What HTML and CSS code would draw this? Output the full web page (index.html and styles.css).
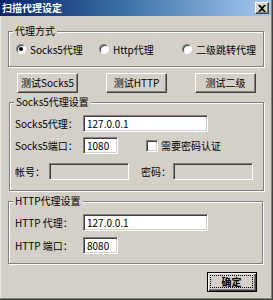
FILE: index.html
```html
<!DOCTYPE html>
<html>
<head>
<meta charset="utf-8">
<link rel="stylesheet" href="styles.css">
</head>
<body>
<div class="dialog">
  <div class="titlebar">
    <span class="title">扫描代理设定</span>
    <span class="close"><svg width="8" height="7" viewBox="0 0 8 7"><path d="M0 0h2l2 2 2-2h2L5 3.5 8 7H6L4 5 2 7H0l3-3.5z" fill="#000"/></svg></span>
  </div>

  <div class="group g1">
    <span class="legend">代理方式</span>
    <div class="radios">
      <label class="radio r1"><span class="rb checked"></span>Socks5代理</label>
      <label class="radio r2"><span class="rb"></span>Http代理</label>
      <label class="radio r3"><span class="rb"></span>二级跳转代理</label>
    </div>
  </div>

  <div class="btnrow">
    <span class="btn">测试Socks5</span>
    <span class="btn">测试HTTP</span>
    <span class="btn">测试二级</span>
  </div>

  <div class="group g2">
    <span class="legend">Socks5代理设置</span>
    <div class="row">
      <span class="lbl">Socks5代理：</span>
      <span class="inp wide">127.0.0.1</span>
    </div>
    <div class="row row2">
      <span class="lbl">Socks5端口：</span>
      <span class="inp port">1080</span>
      <span class="cb"></span>
      <span class="cbtext">需要密码认证</span>
    </div>
    <div class="row row3">
      <span class="lbl short">帐号：</span>
      <span class="inp acct dis"></span>
      <span class="lbl pwd">密码：</span>
      <span class="inp acct dis"></span>
    </div>
  </div>

  <div class="group g3">
    <span class="legend">HTTP代理设置</span>
    <div class="row">
      <span class="lbl">HTTP 代理：</span>
      <span class="inp wide">127.0.0.1</span>
    </div>
    <div class="row row2b">
      <span class="lbl">HTTP 端口：</span>
      <span class="inp port">8080</span>
    </div>
  </div>

  <div class="footer">
    <span class="btn ok"><span class="focus">确定</span></span>
  </div>
</div>
</body>
</html>
```

FILE: styles.css
```css
* { box-sizing: border-box; }
html, body { margin: 0; padding: 0; background: #d4d0c8; }
body {
  font-family: "Noto Sans CJK SC", "Liberation Sans", sans-serif;
  font-size: 10px;
  color: #000;
}
.dialog {
  width: 273px;
  height: 300px;
  background: #d4d0c8;
  box-shadow: inset -1px -1px 0 #404040, inset -2px -2px 0 #808080, inset 1px 0 0 #e8e6e1;
  overflow: hidden;
}
.titlebar {
  height: 16px;
  margin-right: 2px;
  background: linear-gradient(to right, #0a246a 0%, #3a6ea5 45%, #a6caf0 100%);
  display: flex;
  align-items: center;
  justify-content: space-between;
  padding: 0 2px 0 2px;
}
.title {
  color: #fff;
  font-weight: bold;
  font-size: 10px;
  line-height: 14px;
  letter-spacing: 0;
}
.close {
  width: 14px;
  height: 12px;
  background: #d4d0c8;
  border-top: 1px solid #fff;
  border-left: 1px solid #fff;
  border-right: 1px solid #404040;
  border-bottom: 1px solid #404040;
  box-shadow: inset -1px -1px 0 #808080;
  display: flex;
  align-items: center;
  justify-content: center;
}
.close svg { display: block; }

.group {
  position: relative;
  border: 1px solid #808080;
  box-shadow: inset 1px 1px 0 #fff, 1px 1px 0 #fff;
}
.legend {
  position: absolute;
  top: -8px;
  left: 4px;
  padding: 0 2px;
  line-height: 14px;
  background: #d4d0c8;
  white-space: nowrap;
}
.g1 {
  margin: 15px 9px 0 8px;
  height: 36px;
  padding: 10px 0 0 7px;
}
.radios { display: flex; height: 14px; align-items: center; }
.radio { display: flex; align-items: center; white-space: nowrap; }
.r1 { width: 83px; }
.r2 { width: 83px; }
.rb {
  width: 10px;
  height: 10px;
  border-radius: 50%;
  background: #fff;
  border: 1px solid;
  border-color: #808080 #fff #fff #808080;
  box-shadow: inset 1px 1px 0 #404040;
  margin-right: 4px;
  position: relative;
  flex: none;
}
.rb.checked::after {
  content: "";
  position: absolute;
  left: 2px;
  top: 2px;
  width: 4px;
  height: 4px;
  border-radius: 50%;
  background: #000;
}

.btnrow {
  display: flex;
  gap: 28px;
  margin: 6px 0 0 17px;
}
.btn {
  width: 61px;
  height: 20px;
  display: flex;
  align-items: center;
  justify-content: center;
  background: #d4d0c8;
  border-top: 1px solid #fff;
  border-left: 1px solid #fff;
  border-right: 1px solid #404040;
  border-bottom: 1px solid #404040;
  box-shadow: inset -1px -1px 0 #808080;
  white-space: nowrap;
  line-height: 14px;
}

.g2 {
  margin: 9px 9px 0 9px;
  height: 89px;
  padding: 12px 0 0 5px;
}
.g3 {
  margin: 10px 10px 0 8px;
  height: 63px;
  padding: 12px 0 0 6px;
}
.row {
  display: flex;
  align-items: center;
  height: 17px;
}
.row2 { margin-top: 5px; }
.row3 { margin-top: 9px; }
.row2b { margin-top: 6px; }
.lbl { width: 68px; white-space: nowrap; }
.lbl.short { width: 34px; }
.lbl.pwd { width: 32px; margin-left: 12px; }
.inp {
  height: 17px;
  background: #fff;
  border: 1px solid;
  border-color: #808080 #fff #fff #808080;
  box-shadow: inset 1px 1px 0 #404040, inset -1px -1px 0 #d4d0c8;
  padding: 0 3px;
  line-height: 15px;
  white-space: nowrap;
  overflow: hidden;
}
.inp.wide { width: 125px; }
.inp.port { width: 35px; }
.inp.acct { width: 80px; }
.inp.dis { background: #d4d0c8; }
.cb {
  width: 12px;
  height: 12px;
  margin-left: 28px;
  background: #fff;
  border: 1px solid;
  border-color: #808080 #fff #fff #808080;
  box-shadow: inset 1px 1px 0 #404040, inset -1px -1px 0 #d4d0c8;
  flex: none;
}
.cbtext { margin-left: 3px; white-space: nowrap; }

.footer {
  margin: 8px 0 0 207px;
}
.btn.ok {
  width: 50px;
  height: 20px;
  border: 1px solid #000;
  box-shadow: inset 1px 1px 0 #fff, inset -1px -1px 0 #404040, inset -2px -2px 0 #808080;
  padding: 3px 4px 4px 3px;
}
.focus {
  display: flex;
  align-items: center;
  justify-content: center;
  width: 100%;
  height: 100%;
  outline: 1px dotted #000;
  font-weight: bold;
}
```
